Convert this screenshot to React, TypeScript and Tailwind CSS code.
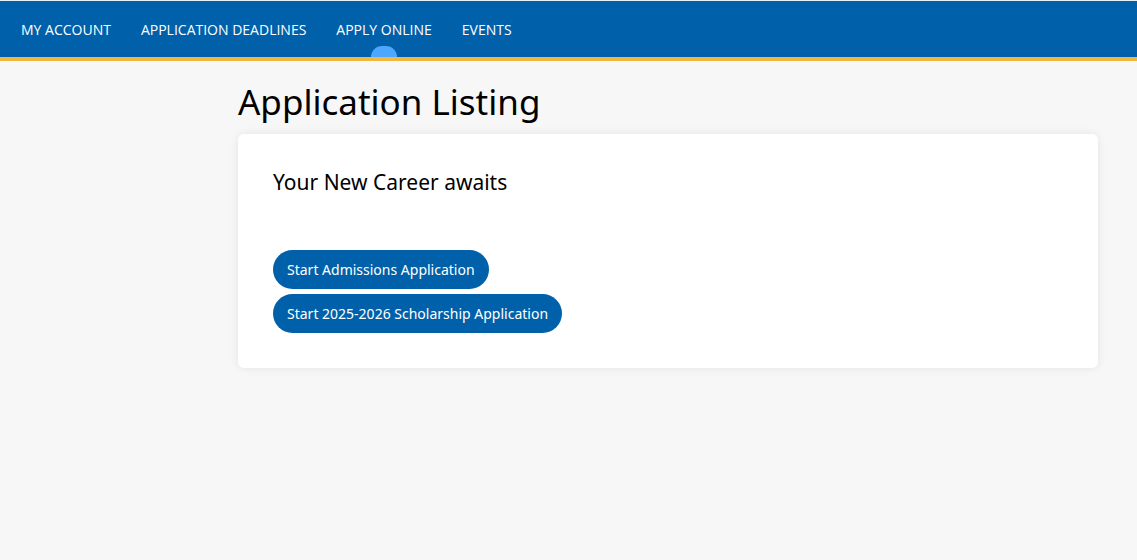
export default function App() {
  const nav = ["MY ACCOUNT", "APPLICATION DEADLINES", "APPLY ONLINE", "EVENTS"];
  return (
    <div className="min-h-[560px] bg-[#f7f7f7] font-['Noto_Sans',sans-serif]">
      <div className="h-px bg-[#e8eef4]" />
      <header className="relative h-[56px] bg-[#0061aa] border-b-[4px] border-[#f0b83f] box-content">
        <nav className="flex h-full items-center pl-[21px] gap-[30px] font-['Open_Sans',sans-serif] text-[14px] text-white">
          {nav.map((n) => (
            <div key={n} className="relative h-full flex items-center">
              <span>{n}</span>
              {n === "APPLY ONLINE" && (
                <span className="absolute bottom-0 left-1/2 -translate-x-1/2 w-[26px] h-[11px] rounded-t-full bg-[#4da6ff]" />
              )}
            </div>
          ))}
        </nav>
      </header>
      <main className="pl-[238px] pr-[39px]">
        <h1 className="text-[35px] leading-none pt-[23px] pb-[15px] text-black font-['Noto_Sans',sans-serif]">
          Application Listing
        </h1>
        <div className="bg-white rounded-[6px] shadow-[0_0_10px_rgba(0,0,0,0.08)] pl-[35px] pt-[34px] pb-[35px]">
          <h2 className="text-[21px] text-black leading-[28px]">Your New Career awaits</h2>
          <div className="mt-[54px] flex flex-col items-start gap-[5px]">
            <button className="h-[39px] px-[14px] rounded-full bg-[#0061aa] text-white text-[14px]">
              Start Admissions Application
            </button>
            <button className="h-[39px] px-[14px] rounded-full bg-[#0061aa] text-white text-[14px]">
              Start 2025-2026 Scholarship Application
            </button>
          </div>
        </div>
      </main>
    </div>
  );
}
